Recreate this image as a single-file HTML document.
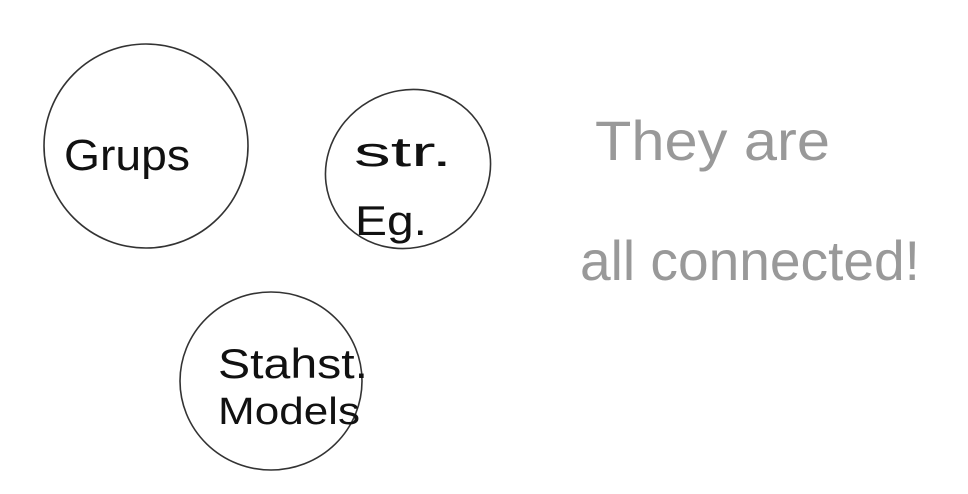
<!DOCTYPE html>
<html><head><meta charset="utf-8"><style>
html,body{margin:0;padding:0;background:#fff;width:968px;height:494px;overflow:hidden}
svg text{font-family:"Liberation Sans",sans-serif;font-weight:normal}
</style></head><body>
<svg width="968" height="494" viewBox="0 0 968 494" xmlns="http://www.w3.org/2000/svg">
<g fill="none" stroke="#333" stroke-width="1.6">
<ellipse cx="146" cy="146" rx="102" ry="102"/>
<ellipse cx="408" cy="169" rx="84" ry="78" transform="rotate(-30 408 169)"/>
<ellipse cx="271" cy="381" rx="91" ry="89"/>
</g>
<g fill="#111">
<text x="64" y="170" font-size="44" textLength="126" lengthAdjust="spacingAndGlyphs">Grups</text>
<text x="354" y="166" font-size="42" textLength="98" lengthAdjust="spacingAndGlyphs">str.</text>
<text x="355" y="235" font-size="42" textLength="72" lengthAdjust="spacingAndGlyphs">Eg.</text>
<text x="218" y="378" font-size="42" textLength="150" lengthAdjust="spacingAndGlyphs">Stahst.</text>
<text x="218" y="424" font-size="38" textLength="142" lengthAdjust="spacingAndGlyphs">Models</text>
</g>
<g fill="#999">
<text x="595" y="160" font-size="56" textLength="235" lengthAdjust="spacingAndGlyphs">They are</text>
<text x="580" y="280" font-size="56" textLength="340" lengthAdjust="spacingAndGlyphs">all connected!</text>
</g>
</svg>
</body></html>
